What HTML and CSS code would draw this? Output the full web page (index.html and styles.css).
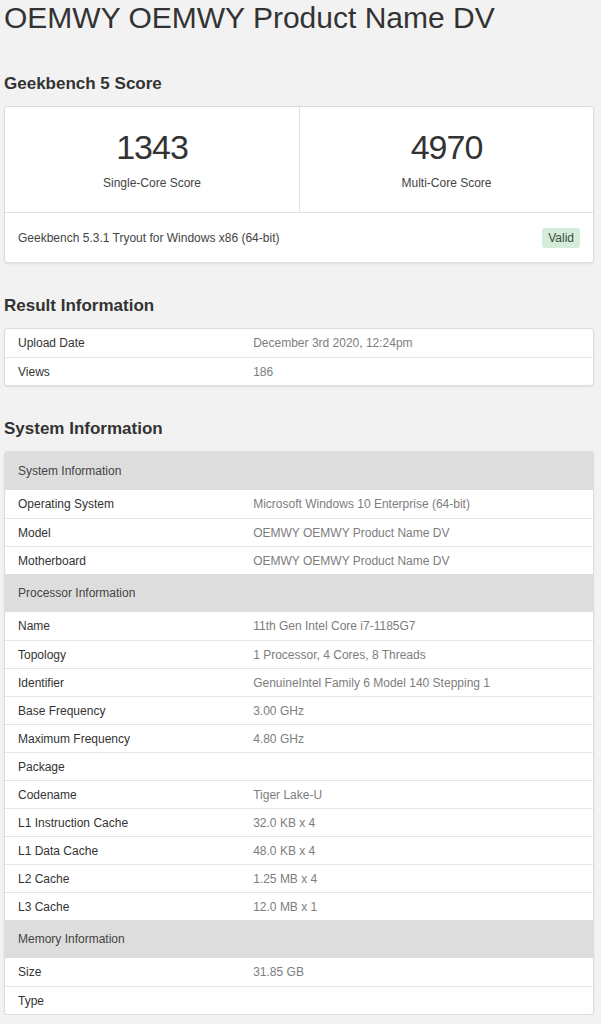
FILE: index.html
```html
<!DOCTYPE html>
<html>
<head>
<meta charset="utf-8">
<link rel="stylesheet" href="styles.css">
</head>
<body>
<div class="page">
  <h1 class="title">OEMWY OEMWY Product Name DV</h1>

  <h2 class="heading first">Geekbench 5 Score</h2>
  <div class="card">
    <div class="scores">
      <div class="score">
        <div class="score-num">1343</div>
        <div class="score-label">Single-Core Score</div>
      </div>
      <div class="score">
        <div class="score-num">4970</div>
        <div class="score-label">Multi-Core Score</div>
      </div>
    </div>
    <div class="score-foot">
      <span>Geekbench 5.3.1 Tryout for Windows x86 (64-bit)</span>
      <span class="badge">Valid</span>
    </div>
  </div>

  <h2 class="heading">Result Information</h2>
  <div class="card">
    <div class="row"><div class="k">Upload Date</div><div class="v">December 3rd 2020, 12:24pm</div></div>
    <div class="row"><div class="k">Views</div><div class="v">186</div></div>
  </div>

  <h2 class="heading">System Information</h2>
  <div class="card">
    <div class="group">System Information</div>
    <div class="row"><div class="k">Operating System</div><div class="v">Microsoft Windows 10 Enterprise (64-bit)</div></div>
    <div class="row"><div class="k">Model</div><div class="v">OEMWY OEMWY Product Name DV</div></div>
    <div class="row"><div class="k">Motherboard</div><div class="v">OEMWY OEMWY Product Name DV</div></div>
    <div class="group">Processor Information</div>
    <div class="row first-in-group"><div class="k">Name</div><div class="v">11th Gen Intel Core i7-1185G7</div></div>
    <div class="row"><div class="k">Topology</div><div class="v">1 Processor, 4 Cores, 8 Threads</div></div>
    <div class="row"><div class="k">Identifier</div><div class="v">GenuineIntel Family 6 Model 140 Stepping 1</div></div>
    <div class="row"><div class="k">Base Frequency</div><div class="v">3.00 GHz</div></div>
    <div class="row"><div class="k">Maximum Frequency</div><div class="v">4.80 GHz</div></div>
    <div class="row"><div class="k">Package</div><div class="v"></div></div>
    <div class="row"><div class="k">Codename</div><div class="v">Tiger Lake-U</div></div>
    <div class="row"><div class="k">L1 Instruction Cache</div><div class="v">32.0 KB x 4</div></div>
    <div class="row"><div class="k">L1 Data Cache</div><div class="v">48.0 KB x 4</div></div>
    <div class="row"><div class="k">L2 Cache</div><div class="v">1.25 MB x 4</div></div>
    <div class="row"><div class="k">L3 Cache</div><div class="v">12.0 MB x 1</div></div>
    <div class="group">Memory Information</div>
    <div class="row"><div class="k">Size</div><div class="v">31.85 GB</div></div>
    <div class="row"><div class="k">Type</div><div class="v"></div></div>
  </div>
</div>
</body>
</html>
```

FILE: styles.css
```css
html, body {
  margin: 0;
  padding: 0;
  background: #f2f2f2;
}
body {
  font-family: "Liberation Sans", Arial, sans-serif;
  color: #333;
}
.page {
  padding: 0 7px 0 4px;
}
.title {
  margin: 0;
  font-size: 30px;
  line-height: 36px;
  font-weight: normal;
  color: #333;
}
.heading {
  margin: 33px 0 12px;
  font-size: 17px;
  line-height: 20px;
  font-weight: bold;
  color: #333;
}
.heading.first {
  margin-top: 38px;
}
.card {
  background: #fff;
  border: 1px solid #dcdcdc;
  border-radius: 3px;
  box-shadow: 0 1px 2px rgba(0, 0, 0, 0.08);
  overflow: hidden;
}
.scores {
  display: grid;
  grid-template-columns: 1fr 1fr;
  border-bottom: 1px solid #e2e2e2;
}
.score {
  text-align: center;
  padding: 20px 0 21px;
}
.score + .score {
  border-left: 1px solid #e2e2e2;
}
.score-num {
  font-size: 34px;
  line-height: 40px;
  letter-spacing: -1px;
  color: #333;
}
.score-label {
  margin-top: 8px;
  font-size: 12px;
  line-height: 16px;
  color: #444;
}
.score-foot {
  display: flex;
  align-items: center;
  justify-content: space-between;
  height: 49px;
  padding: 0 13px;
  font-size: 12px;
  color: #444;
}
.badge {
  background: #d4ecd9;
  color: #3c4a3f;
  border-radius: 3px;
  padding: 0 6px;
  height: 20px;
  line-height: 20px;
  font-size: 12px;
}
.row {
  display: grid;
  grid-template-columns: 40% 60%;
  height: 27px;
  align-items: center;
  font-size: 12px;
  border-top: 1px solid #e6e6e6;
}
.card > .row:first-child {
  border-top: none;
  height: 28px;
}
.group + .row {
  border-top: none;
  height: 28px;
}
.k, .v {
  padding: 0 13px;
  white-space: nowrap;
}
.k {
  color: #333;
}
.v {
  color: #7d7d7d;
}
.group {
  height: 38px;
  line-height: 38px;
  background: #dddddd;
  padding: 0 13px;
  font-size: 12px;
  color: #444;
}
```
